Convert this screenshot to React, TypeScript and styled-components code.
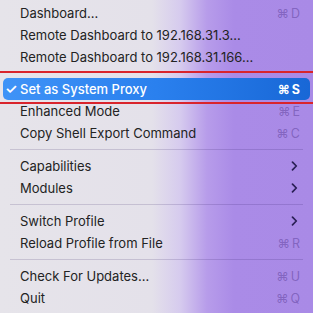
import React from "react";
import styled, { createGlobalStyle } from "styled-components";

const Global = createGlobalStyle`
  html, body { margin: 0; padding: 0; }
  body { font-family: Inter, "Noto Sans", "Liberation Sans", sans-serif; }
`;

const Menu = styled.div`
  width: 313px;
  height: 313px;
  box-sizing: border-box;
  padding-top: 2px;
  display: flex;
  flex-direction: column;
  background: linear-gradient(
    to right,
    #e6e4ea 0px,
    #e4e1ea 152px,
    #d6cbee 180px,
    #b79cea 207px,
    #aa8be7 234px,
    #a98ae6 313px
  );
  overflow: hidden;
`;

const Row = styled.div<{ $active?: boolean }>`
  position: relative;
  height: 22px;
  margin: 0 ${(p) => (p.$active ? "3px" : "0")};
  padding: 0 ${(p) => (p.$active ? "10px" : "13px")} 0
    ${(p) => (p.$active ? "17px" : "20px")};
  display: flex;
  align-items: center;
  justify-content: space-between;
  font-size: 13px;
  color: ${(p) => (p.$active ? "#ffffff" : "#232323")};
  border-radius: 5px;
  background: ${(p) =>
    p.$active ? "linear-gradient(to right, #3f93f7, #2a80ee 50%, #1867d6)" : "transparent"};
  font-weight: ${(p) => (p.$active ? 500 : 400)};
`;

const Label = styled.span`
  white-space: nowrap;
`;

const Check = styled.span`
  position: absolute;
  left: 2px;
  top: 2px;
  font-size: 14px;
  font-weight: 600;
`;

const Shortcut = styled.span<{ $active?: boolean }>`
  display: flex;
  gap: 2px;
  font-size: 12.5px;
  color: ${(p) => (p.$active ? "#ffffff" : "rgba(70, 40, 130, 0.4)")};
  font-weight: ${(p) => (p.$active ? 700 : 400)};
`;

const Chevron = styled.svg`
  width: 7px;
  height: 10px;
  margin-right: 2px;
`;

const Separator = styled.div`
  height: 11px;
  display: flex;
  align-items: center;
  padding: 0 10px;
  &::after {
    content: "";
    flex: 1;
    height: 1px;
    background: rgba(40, 20, 90, 0.16);
  }
`;

const Annotated = styled.div`
  position: relative;
  padding: 10px 0 0;
  &::before,
  &::after {
    content: "";
    position: absolute;
    left: 0;
    right: 0;
    height: 2px;
    background: #d9242c;
  }
  &::before {
    top: 3px;
  }
  &::after {
    bottom: -4px;
  }
`;

const Key = ({ k, active }: { k: string; active?: boolean }) => (
  <Shortcut $active={active}>
    <span>⌘</span>
    <span>{k}</span>
  </Shortcut>
);

const Arrow = () => (
  <Chevron viewBox="0 0 7 10">
    <path d="M1.5 1.2 L5.3 5 L1.5 8.8" fill="none" stroke="#2a1f55" strokeWidth="1.7" strokeLinecap="round" strokeLinejoin="round" />
  </Chevron>
);

export default function App() {
  return (
    <>
      <Global />
      <Menu>
        <Row>
          <Label>Dashboard...</Label>
          <Key k="D" />
        </Row>
        <Row>
          <Label>Remote Dashboard to 192.168.31.3...</Label>
        </Row>
        <Row>
          <Label>Remote Dashboard to 192.168.31.166...</Label>
        </Row>
        <Annotated>
          <Row $active>
            <Check>✓</Check>
            <Label>Set as System Proxy</Label>
            <Key k="S" active />
          </Row>
        </Annotated>
        <Row>
          <Label>Enhanced Mode</Label>
          <Key k="E" />
        </Row>
        <Row>
          <Label>Copy Shell Export Command</Label>
          <Key k="C" />
        </Row>
        <Separator />
        <Row>
          <Label>Capabilities</Label>
          <Arrow />
        </Row>
        <Row>
          <Label>Modules</Label>
          <Arrow />
        </Row>
        <Separator />
        <Row>
          <Label>Switch Profile</Label>
          <Arrow />
        </Row>
        <Row>
          <Label>Reload Profile from File</Label>
          <Key k="R" />
        </Row>
        <Separator />
        <Row>
          <Label>Check For Updates...</Label>
          <Key k="U" />
        </Row>
        <Row>
          <Label>Quit</Label>
          <Key k="Q" />
        </Row>
      </Menu>
    </>
  );
}
